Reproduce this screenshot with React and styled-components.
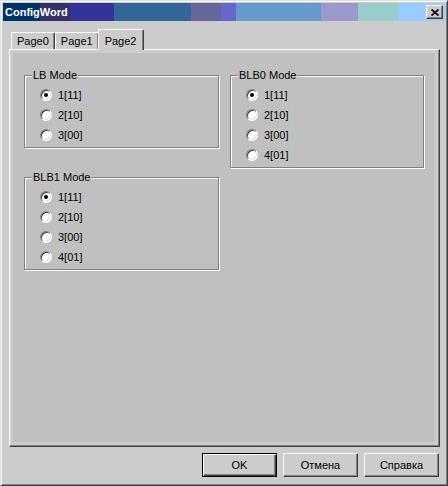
import React from "react";
import styled, { createGlobalStyle } from "styled-components";

const Global = createGlobalStyle`
  html, body { margin: 0; padding: 0; background: #cccccc; }
  * { box-sizing: border-box; }
  body { font-family: "Liberation Sans", Arial, sans-serif; font-size: 11px; color: #000; }
`;

const Window = styled.div`
  width: 448px;
  height: 486px;
  display: flex;
  flex-direction: column;
  background: #cccccc;
  border: 1px solid;
  border-color: #dfdfdf #404040 #404040 #dfdfdf;
  box-shadow: inset 1px 1px 0 #ffffff, inset -1px -1px 0 #808080;
  padding: 2px;
`;

const TitleBar = styled.div`
  height: 18px;
  flex: none;
  display: flex;
  align-items: center;
  justify-content: space-between;
  padding: 0 2px 0 2px;
  background: linear-gradient(
    to right,
    #003366 0 37px,
    #333366 37px 67px,
    #333399 67px 111px,
    #336699 111px 188px,
    #666699 188px 218px,
    #6666cc 218px 233px,
    #6699cc 233px 318px,
    #9999cc 318px 355px,
    #99cccc 355px 396px,
    #99ccff 396px 100%
  );
`;

const Title = styled.span`
  color: #ffffff;
  font-weight: bold;
  font-size: 11px;
  line-height: 18px;
`;

const CloseButton = styled.button`
  width: 17px;
  height: 14px;
  padding: 0;
  margin: 0;
  display: flex;
  align-items: center;
  justify-content: center;
  background: #cccccc;
  border: 1px solid;
  border-color: #ffffff #404040 #404040 #ffffff;
  box-shadow: inset -1px -1px 0 #808080;
`;

const Body = styled.div`
  flex: 1;
  display: flex;
  flex-direction: column;
  padding: 8px 5px 0 6px;
`;

const TabRow = styled.div`
  display: flex;
  align-items: flex-end;
  height: 20px;
  padding-left: 2px;
  position: relative;
  z-index: 1;
`;

const Tab = styled.div`
  height: ${(p) => (p.$active ? "21px" : "17px")};
  margin-bottom: ${(p) => (p.$active ? "-1px" : "0")};
  margin-left: ${(p) => (p.$active ? "-1px" : "0")};
  padding: ${(p) => (p.$active ? "2px 7px 0 6px" : "0 5px")};
  display: flex;
  align-items: center;
  background: #cccccc;
  border-top: 1px solid #ffffff;
  border-left: 1px solid #ffffff;
  border-right: 1px solid #404040;
  border-top-left-radius: 2px;
  border-top-right-radius: 2px;
  box-shadow: inset -1px 0 0 #808080;
  line-height: 13px;
`;

const Panel = styled.div`
  flex: 1;
  display: flex;
  background: #cccccc;
  border: 1px solid;
  border-color: #ffffff #404040 #404040 #ffffff;
  box-shadow: inset -1px -1px 0 #808080;
  padding: 3px 4px 4px 3px;
`;

const Page = styled.div`
  flex: 1;
  background: #c0c0c0;
  padding: 22px 0 0 11px;
  display: grid;
  grid-template-columns: 195px 194px;
  column-gap: 11px;
  align-items: start;
`;

const Column = styled.div`
  display: flex;
  flex-direction: column;
  gap: 29px;
`;

const Group = styled.div`
  position: relative;
  border: 1px solid #808080;
  box-shadow: inset 1px 1px 0 #ffffff, 1px 1px 0 #ffffff;
  padding: 9px 0 2px 15px;
  display: flex;
  flex-direction: column;
`;

const Legend = styled.span`
  position: absolute;
  top: -7px;
  left: 7px;
  padding: 0 1px;
  background: #c0c0c0;
  line-height: 13px;
`;

const Row = styled.label`
  height: 20px;
  display: flex;
  align-items: center;
  gap: 6px;
`;

const RadioCircle = styled.span`
  width: 12px;
  height: 12px;
  border-radius: 50%;
  background: #ffffff;
  border: 1px solid;
  border-color: #808080 #ffffff #ffffff #808080;
  box-shadow: inset 1px 1px 0 #404040, inset -1px -1px 0 #dfdfdf;
  display: flex;
  align-items: center;
  justify-content: center;
  flex: none;
  &::after {
    content: "";
    width: 4px;
    height: 4px;
    border-radius: 50%;
    background: ${(p) => (p.$checked ? "#000000" : "transparent")};
  }
`;

const Footer = styled.div`
  flex: none;
  display: flex;
  justify-content: flex-end;
  gap: 6px;
  padding: 6px;
`;

const Button = styled.button`
  width: 75px;
  height: 24px;
  padding: 0;
  font-family: "Liberation Sans", Arial, sans-serif;
  font-size: 11px;
  color: #000;
  background: #cccccc;
  border: 1px solid;
  border-color: ${(p) =>
    p.$default ? "#000000" : "#ffffff #404040 #404040 #ffffff"};
  box-shadow: ${(p) =>
    p.$default
      ? "inset 1px 1px 0 #ffffff, inset -1px -1px 0 #404040, inset -2px -2px 0 #808080"
      : "inset -1px -1px 0 #808080"};
`;

function Radio({ label, checked }) {
  return (
    <Row>
      <RadioCircle $checked={checked} />
      <span>{label}</span>
    </Row>
  );
}

function RadioGroup({ title, options }) {
  return (
    <Group>
      <Legend>{title}</Legend>
      {options.map((o, i) => (
        <Radio key={o} label={o} checked={i === 0} />
      ))}
    </Group>
  );
}

export default function App() {
  return (
    <>
      <Global />
      <Window>
        <TitleBar>
          <Title>ConfigWord</Title>
          <CloseButton aria-label="close">
            <svg width="8" height="7" viewBox="0 0 8 7">
              <path d="M0.5 0.5 L7.5 6.5 M7.5 0.5 L0.5 6.5" stroke="#000" strokeWidth="1.7" />
            </svg>
          </CloseButton>
        </TitleBar>
        <Body>
          <TabRow>
            <Tab>Page0</Tab>
            <Tab>Page1</Tab>
            <Tab $active>Page2</Tab>
          </TabRow>
          <Panel>
            <Page>
              <Column>
                <RadioGroup title="LB Mode" options={["1[11]", "2[10]", "3[00]"]} />
                <RadioGroup title="BLB1 Mode" options={["1[11]", "2[10]", "3[00]", "4[01]"]} />
              </Column>
              <Column>
                <RadioGroup title="BLB0 Mode" options={["1[11]", "2[10]", "3[00]", "4[01]"]} />
              </Column>
            </Page>
          </Panel>
        </Body>
        <Footer>
          <Button $default>OK</Button>
          <Button>Отмена</Button>
          <Button>Справка</Button>
        </Footer>
      </Window>
    </>
  );
}
